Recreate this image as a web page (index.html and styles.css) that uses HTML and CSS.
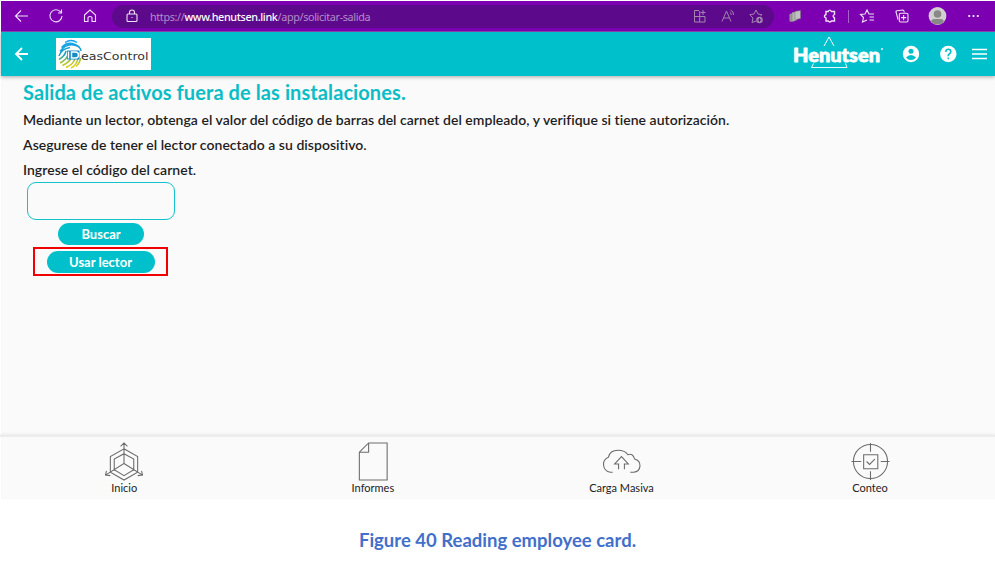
FILE: index.html
```html
<!DOCTYPE html>
<html lang="es">
<head>
<meta charset="utf-8">
<title>Salida de activos</title>
<link rel="stylesheet" href="styles.css">
</head>
<body>
<div class="frame">
  <div class="browser">
    <svg class="ico" viewBox="0 0 20 20"><path d="M16 10H4M9 4.5L3.5 10L9 15.5"/></svg>
    <svg class="ico" viewBox="0 0 20 20"><path d="M14.8 6.2A6 6 0 1 0 16 10M15.5 3.5V7H12"/></svg>
    <svg class="ico" viewBox="0 0 20 20"><path d="M4.5 9L10 4L15.5 9V15.5H12V11.5Q12 10.5 10 10.5T8 11.5V15.5H4.5Z"/></svg>
    <div class="address">
      <svg class="ico" viewBox="0 0 20 20"><rect x="5" y="8" width="10" height="7.5" rx="1"/><path d="M7.5 8V6.5a2.5 2.5 0 0 1 5 0V8M9.500 11.500h1"/></svg>
      <span class="url">https://<b>www.henutsen.link</b>/app/solicitar-salida</span>
      <svg class="ico dim" viewBox="0 0 20 20"><path d="M9 4.5H4.5V16H15V10.5H4.5M9.7 5V16M13 4V9M10.5 6.5H15.5"/></svg>
      <svg class="ico dim" viewBox="0 0 20 20"><path d="M4 15.5L8.5 5L13 15.5M5.7 12H11.3M11.8 6.2Q13.5 7 13.2 9M12.5 4Q16 5.5 15.5 9"/></svg>
      <svg class="ico dim" viewBox="0 0 20 20"><path d="M10 15L6 16.5L7 12L3.8 8.7L8 8L10 4L12 8L16 8.7L14.5 10"/><circle cx="13.5" cy="14" r="3.3" fill="#a184af" stroke="none"/><path d="M11.7 14H15.3M13.5 12.2V15.8" stroke="#5c0a8b"/></svg>
    </div>
    <svg class="ico copy" viewBox="0 0 20 20"><path d="M4.500 8L9 7V15L6 16L4.500 15Z" fill="#999" stroke="none"/><path d="M7 6.500L12 5.500V14L8 15.500L7 15Z" fill="#b5b5b5" stroke="#777" stroke-width=".5"/><path d="M10 5.500L15.500 4.500V12.500L11 13.500L10 13Z" fill="#c2c2c2" stroke="#777" stroke-width=".5"/></svg>
    <svg class="ico g15" viewBox="0 0 20 20"><path d="M6 5.500H8.300Q9.500 2.800 11.500 5.500H14.500V8.500Q11.700 10 14.500 11.800V15H11.500Q9.500 17 8.300 15H6V12Q2.800 10 6 8.500Z" stroke-width="1.400"/></svg>
    <span class="sep"></span>
    <svg class="ico g8" viewBox="0 0 20 20"><path d="M10 14L5.500 16L6.500 11.500L3.500 8.500L8 8L10 4L12 8H17M12.500 11H17M12.500 14H17"/></svg>
    <svg class="ico g15" viewBox="0 0 20 20"><path d="M6 13.500L4 6Q3.800 5 5 4.800L11 4Q12 4 12.300 6.500"/><rect x="7.300" y="7.300" width="8.700" height="8.700" rx="1.500"/><path d="M11.600 9V14.200M9 11.600H14.200"/></svg>
    <svg class="ico g15" viewBox="0 0 20 20"><circle cx="10.500" cy="10" r="8.900" fill="#d2d0ce" stroke="none"/><circle cx="10.500" cy="8" r="3.800" fill="#888" stroke="none"/><path d="M4.300 16.200Q4 13 7.500 13H13.500Q17 13 16.700 16.200Q10.500 21 4.300 16.200Z" fill="#888" stroke="none"/></svg>
    <svg class="ico g16" viewBox="0 0 20 20"><g fill="#fff" stroke="none"><circle cx="6.200" cy="10" r="1.100"/><circle cx="10.500" cy="10" r="1.100"/><circle cx="14.800" cy="10" r="1.100"/></g></svg>
  </div>
  <header class="appbar">
    <svg class="back" viewBox="0 0 20 20"><path d="M16 10H4.500M10 4L4 10L10 16"/></svg>
    <svg class="ideas" viewBox="0 0 95 32">
      <defs><linearGradient id="print" gradientUnits="userSpaceOnUse" x1="12" y1="2" x2="16" y2="30"><stop offset="0" stop-color="#12a5f4"/><stop offset=".5" stop-color="#1aa0c4"/><stop offset=".75" stop-color="#a5bf30"/><stop offset="1" stop-color="#e8ce00"/></linearGradient></defs>
      <rect width="95" height="32" fill="#fff"/>
      <g fill="none" stroke="url(#print)" stroke-width="1.500">
        <path d="M9 4.500Q15 .500 21 4.500M5.500 9.500Q13 1.500 23.500 9M4 13.500Q10 5.500 17.500 7T25 13M3 18Q5 11 14 9.500M3 21.500Q9 18 10 13M4 25Q10 22 12 17M6.500 27.500Q14 24 15.500 19M10 29.500Q18 26 19 20M15 30Q21 27 22 20M20 28.500Q24 25 24.500 20"/>
      </g>
      <rect x="11" y="12.500" width="12.500" height="9" fill="#168bc4"/>
      <path d="M12.500 13.500V20.500M15.500 20V14H19.500Q22.500 14 22.500 17T19.500 20Z" fill="none" stroke="#fff" stroke-width="1.400"/>
      <text class="ideas-text" x="25" y="22" textLength="67.500" lengthAdjust="spacingAndGlyphs">easControl</text>
    </svg>
    <svg class="henutsen" viewBox="0 0 92 36">
      <path d="M31 10L36 1L41 10" fill="none" stroke="#fff" stroke-width="1"/>
      <path d="M20.500 27.500L18.500 31.500H54L52.500 27.500" fill="none" stroke="#fff" stroke-width=".9"/>
      <text class="brand" x="0" y="26" textLength="87" lengthAdjust="spacingAndGlyphs">Henutsen</text>
      <path d="M88 12l2 2m0-2l-2 2" stroke="#fff" stroke-width=".7"/>
    </svg>
    <svg class="user" viewBox="0 0 20 20"><circle cx="10" cy="10" r="8.200" fill="#fff"/><circle cx="10" cy="7.200" r="2.500" fill="#00c1cb"/><path d="M5 13.500Q7 11 10 11T15 13.500Q13 16 10 16T5 13.500Z" fill="#00c1cb"/></svg>
    <svg class="help" viewBox="0 0 20 20"><circle cx="10.300" cy="10" r="8.200" fill="#fff"/><path d="M7.800 8Q7.800 5.300 10.300 5.300T12.800 7.700Q12.800 9 11.300 10T10.300 12.300M10.300 13.500V15.200" fill="none" stroke="#00c1cb" stroke-width="1.600"/></svg>
    <svg class="menu" viewBox="0 0 20 20"><path d="M3 5.500H18M3 10H18M3 14.500H18" stroke="#fff" stroke-width="1.700"/></svg>
  </header>
  <main>
    <h1>Salida de activos fuera de las instalaciones.</h1>
    <p class="p1">Mediante un lector, obtenga el valor del código de barras del carnet del empleado, y verifique si tiene autorización.</p>
    <p class="p2">Asegurese de tener el lector conectado a su dispositivo.</p>
    <p class="p3">Ingrese el código del carnet.</p>
    <div class="form">
      <input type="text" aria-label="Código del carnet">
      <button class="search">Buscar</button>
      <div class="highlight"><button class="reader">Usar lector</button></div>
    </div>
  </main>
  <nav>
    <a><svg viewBox="0 0 40 40"><path d="M20 1V22L1 34M20 22L39 34M16.500 4.500L20 1L23.500 4.500M2 29.500L1 34L6 34.500M38 29.500L39 34L34 34.500M20 7L34 15V31L20 39L6 31V15ZM20 12L30 17.500V28.500L20 34.500L10 28.500V17.500Z"/></svg><span class="l1">Inicio</span></a>
    <a><svg viewBox="0 0 40 40"><path d="M15.500 1H34.500V39H6V10.500ZM15.500 1V10.500H6"/></svg><span class="l2">Informes</span></a>
    <a><svg viewBox="0 0 40 40"><path d="M11.500 31H9A8 8 0 0 1 7 15.700Q8.500 8.500 17 8.500Q24 8.500 27 13Q32 11 34 17.500Q39.500 19 39.500 24.500Q39 30.500 33 31H29.500M17.500 28V22.500H13.500L20.500 15L27.500 22.500H23.500V28"/></svg><span class="l3">Carga Masiva</span></a>
    <a><svg viewBox="0 0 40 40"><circle cx="20.500" cy="20" r="17.500"/><path d="M20.500 1V10M20.500 30V39M1 20H11M31 20H40M13.500 13H28V27.500H13.500ZM16.500 20L19.500 23L25 17.500"/></svg><span class="l4">Conteo</span></a>
  </nav>
</div>
<p class="caption">Figure 40 Reading employee card.</p>
</body>
</html>
```
FILE: styles.css
```css
* { box-sizing: border-box; }
body { margin: 0; background: #fff; font-family: Lato, "Liberation Sans", sans-serif; font-variant-ligatures: none; overflow: hidden; }
.frame { margin: 1px 0 0 1px; height: 498px; background: #fafafa; display: flex; flex-direction: column; }
.browser { height: 31px; padding-left: 11px; background: #7c00b2; border-bottom: 1px solid #9348b9; display: flex; align-items: center; flex: none; }
.ico { width: 20px; height: 20px; flex: none; fill: none; stroke: #eee1f5; stroke-width: 1.1; }
.browser > .ico:nth-child(-n+2) { margin-right: 14px; }
.dim { stroke: #a184af; stroke-width: 1; }
.address { margin-left: 12px; width: 662px; height: 23px; border-radius: 12px; background: #5c0a8b; padding: 0 8px 0 10px; display: flex; align-items: center; gap: 8px; flex: none; }
.url { flex: 1; font: 10.8px "Noto Sans", sans-serif; color: #b58ac9; white-space: nowrap; letter-spacing: -.35px; }
.url b { font-weight: 500; color: #fff; }
.copy { margin-left: 11px; }
.g15 { margin-left: 15px; }
.g16 { margin-left: 16px; }
.g8 { margin-left: 8px; }
.sep { width: 1px; height: 13px; margin-left: 8px; background: #aa62cd; }
.appbar { height: 44px; flex: none; background: #00c1cb; box-shadow: 0 1px 4px #0005; display: flex; align-items: center; padding-left: 11px; }
.appbar svg { flex: none; }
.back { width: 20px; height: 20px; fill: none; stroke: #fff; stroke-width: 1.8; }
.ideas { width: 95px; height: 32px; margin-left: 24px; }
.ideas-text { font: 10.5px "DejaVu Sans", sans-serif; fill: #333; }
.henutsen { width: 92px; height: 36px; margin-left: 642px; }
.brand { font: 900 18.5px Lato, sans-serif; fill: #fff; stroke: #fff; stroke-width: .8; stroke-linejoin: round; }
.user, .help, .menu { width: 20px; height: 20px; }
.user { margin-left: 16px; }
.help { margin-left: 17px; }
.menu { margin-left: 11px; }
main { padding: 4px 0 0 22px; flex: 1; color: #1e1e1e; }
h1 { margin: 0; font-size: 20px; line-height: 25px; font-weight: 700; color: #0bbdc6; white-space: nowrap; letter-spacing: .09px; }
main p { margin: 0; font-size: 14px; line-height: 25px; font-weight: 600; white-space: nowrap; letter-spacing: .03px; }
main .p1 { padding-top: 2px; }
.form { width: 156px; display: flex; flex-direction: column; align-items: center; }
input { width: 148px; height: 38px; border: 1px solid #12c2cb; border-radius: 9px; background: #fafafa; margin: 0; }
button { border: 0; border-radius: 12px; background: #00c1cb; color: #fff; font: 700 13px/22px Lato, sans-serif; height: 22px; padding: 0; }
.search { width: 86px; margin-top: 3px; }
.highlight { width: 135px; height: 29px; border: 2px solid #f00000; display: flex; align-items: center; justify-content: center; margin: 2px 1px 0 0; padding-top: 1px; }
.reader { width: 108px; }
nav { height: 64px; flex: none; border-top: 2px solid #ececec; display: grid; grid-template-columns: repeat(4, 248.6px); padding-top: 5px; margin-left: -1px; box-shadow: 0 -1px 3px #0001; }
nav a { display: flex; flex-direction: column; align-items: center; color: #222; font-size: 11px; line-height: 14px; }
nav svg { width: 40px; height: 39px; fill: none; stroke: #6c6c6c; stroke-width: 1.1; }
.caption { margin: 29px 0 0; text-align: center; font-size: 18.5px; line-height: 25px; font-weight: 700; color: #426fca; }
```
